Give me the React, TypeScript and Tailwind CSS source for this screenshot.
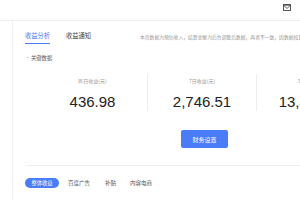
import React from "react";

export default function App() {
  const font = { fontFamily: '"Noto Sans CJK SC", "Noto Sans", sans-serif' };
  return (
    <div className="w-[300px] h-[200px] overflow-hidden bg-white flex flex-col" style={font}>
      <div className="h-[21px] shrink-0 border-b border-[#eeeeee] flex justify-end items-start pr-[9px] pt-[4px]">
        <svg width="8" height="7" viewBox="0 0 8 7">
          <rect x="0.5" y="0.5" width="7" height="6" fill="none" stroke="#555" strokeWidth="1" />
          <rect x="0.5" y="0.5" width="7" height="1.2" fill="#555" />
          <path d="M1 1.8 L4 4.4 L7 1.8" fill="none" stroke="#555" strokeWidth="0.9" />
        </svg>
      </div>
      <div className="flex flex-1 min-h-0">
        <div className="w-[13px] shrink-0 border-r border-[#f0f0f0]" />
        <div className="flex-1 min-w-0 overflow-hidden pl-[12px] flex flex-col">
          <div className="flex items-start pt-[11px] shrink-0">
            <div className="flex flex-col">
              <span className="text-[6.25px] leading-[7px] text-[#4a7cf7] whitespace-nowrap">收益分析</span>
              <div className="mt-[3.5px] h-[1.5px] bg-[#4a7cf7]" />
            </div>
            <span className="ml-[16px] text-[6.25px] leading-[7px] text-[#444] whitespace-nowrap">收益通知</span>
            <span className="ml-[49px] mt-[1.5px] shrink-0 text-[4.8px] leading-[6px] text-[#999] whitespace-nowrap">
              本页数据为预估收入，结算金额为后台调整后数据，两者不一致，因数据核算周期不同，请以结算数据为准
            </span>
          </div>
          <div className="mt-[11px] flex items-center text-[5.3px] leading-[7px] text-[#555] shrink-0">
            <span className="w-[6px] text-[#999]">•</span>
            <span className="whitespace-nowrap">关键数据</span>
          </div>
          <div className="mt-[12px] ml-[13px] flex shrink-0">
            {[
              { label: "昨日收益(元)", value: "436.98", w: "w-[110px]", b: true },
              { label: "7日收益(元)", value: "2,746.51", w: "w-[109px]", b: true },
              { label: "30日收益(元)", value: "13,458.27", w: "w-[110px]", b: false },
            ].map((c, i) => (
              <div
                key={i}
                className={`${c.w} shrink-0 h-[37px] flex flex-col items-center pt-[4px] ${c.b ? "border-r border-[#eeeeee]" : ""}`}
              >
                <span className="text-[5px] leading-[6px] text-[#999] whitespace-nowrap">{c.label}</span>
                <span
                  className="mt-[10px] text-[15px] leading-[15px] text-[#222] whitespace-nowrap"
                  style={{ fontFamily: '"Liberation Sans", Arial, sans-serif' }}
                >
                  {c.value}
                </span>
              </div>
            ))}
          </div>
          <div className="mt-[19px] ml-[156px] w-[47px] h-[18px] shrink-0 rounded-[2px] bg-[#4a7cf7] flex items-center justify-center">
            <span className="text-[6px] leading-[7px] text-white whitespace-nowrap">财务设置</span>
          </div>
          <div className="mt-[17px] h-px bg-[#f0f0f0] shrink-0" />
          <div className="mt-[12px] flex items-center shrink-0">
            <div className="w-[34px] h-[10px] rounded-full bg-[#4a7cf7] flex items-center justify-center">
              <span className="text-[5.25px] leading-[6px] text-white whitespace-nowrap">整体收益</span>
            </div>
            <span className="ml-[9px] text-[5.5px] leading-[6px] text-[#555] whitespace-nowrap">百度广告</span>
            <span className="ml-[15px] text-[5.5px] leading-[6px] text-[#555] whitespace-nowrap">补贴</span>
            <span className="ml-[14px] text-[5.5px] leading-[6px] text-[#555] whitespace-nowrap">内容电商</span>
          </div>
        </div>
      </div>
    </div>
  );
}
